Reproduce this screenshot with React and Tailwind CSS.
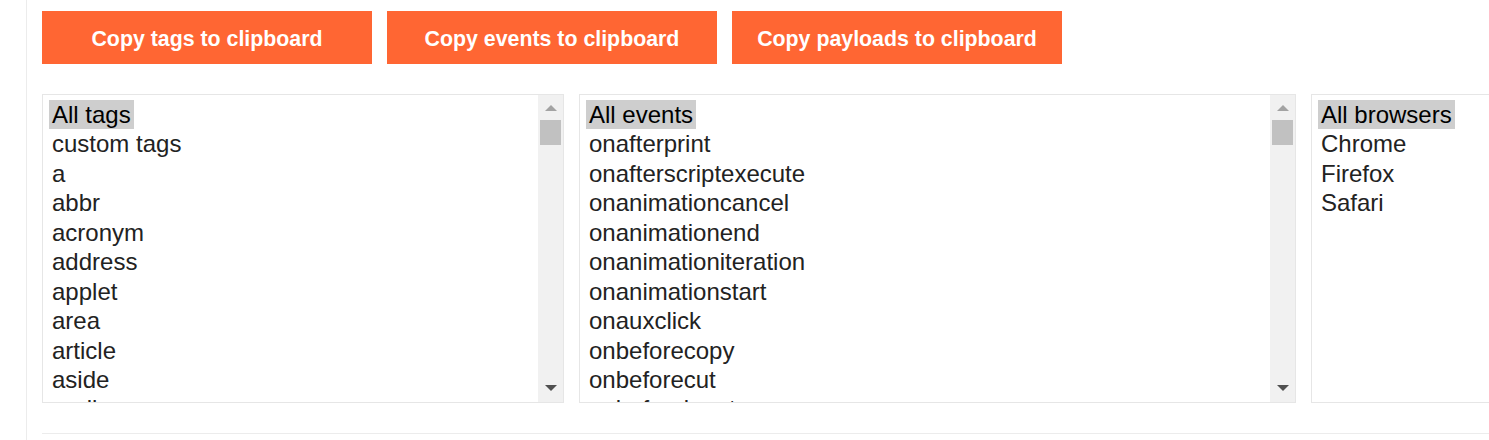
const tags = ['All tags', 'custom tags', 'a', 'abbr', 'acronym', 'address', 'applet', 'area', 'article', 'aside', 'audio', 'b'];
const events = ['All events', 'onafterprint', 'onafterscriptexecute', 'onanimationcancel', 'onanimationend', 'onanimationiteration', 'onanimationstart', 'onauxclick', 'onbeforecopy', 'onbeforecut', 'onbeforeinput', 'onbeforeprint'];
const browsers = ['All browsers', 'Chrome', 'Firefox', 'Safari'];

function Scrollbar() {
  return (
    <div className="w-[25px] shrink-0 bg-[#f1f1f1] flex flex-col items-center">
      <div className="h-[16px] flex items-end">
        <div className="w-0 h-0 border-l-[6px] border-r-[6px] border-b-[6px] border-l-transparent border-r-transparent border-b-[#a3a3a3]" />
      </div>
      <div className="mt-[9px] w-[21px] h-[25px] bg-[#c1c1c1]" />
      <div className="flex-1" />
      <div className="mb-[11px] w-0 h-0 border-l-[6px] border-r-[6px] border-t-[6px] border-l-transparent border-r-transparent border-t-[#505050]" />
    </div>
  );
}

function ListBox({ items, width, scroll }) {
  return (
    <div className={`${width} h-[309px] shrink-0 border border-[#e6e6e6] flex overflow-hidden`}>
      <div className="flex-1 pt-[5px] pl-[6px] overflow-hidden">
        {items.map((item, i) => (
          <div key={item} className="leading-[29.44px] h-[29.44px]">
            <span className={`inline-block px-[3px] ${i === 0 ? 'bg-[#cecece] text-black' : 'text-[#222]'}`}>{item}</span>
          </div>
        ))}
      </div>
      {scroll && <Scrollbar />}
    </div>
  );
}

export default function App() {
  const buttons = ['Copy tags to clipboard', 'Copy events to clipboard', 'Copy payloads to clipboard'];
  return (
    <div className="w-[1489px] h-[440px] overflow-hidden bg-white font-['Liberation_Sans',Arial,sans-serif]">
      <div className="ml-[26px] h-full border-l border-[#ececec] pl-[15px] pt-[11px]">
        <div className="flex gap-[15px]">
          {buttons.map(b => (
            <button key={b} className="w-[330px] h-[53px] pt-[4px] bg-[#ff6633] text-white font-bold text-[21.33px]">{b}</button>
          ))}
        </div>
        <div className="mt-[30px] flex gap-[15px] text-[24px]">
          <ListBox items={tags} width="w-[522px]" scroll />
          <ListBox items={events} width="w-[717px]" scroll />
          <ListBox items={browsers} width="w-[420px]" />
        </div>
        <div className="mt-[30px] border-b border-[#ececec]" />
      </div>
    </div>
  );
}
